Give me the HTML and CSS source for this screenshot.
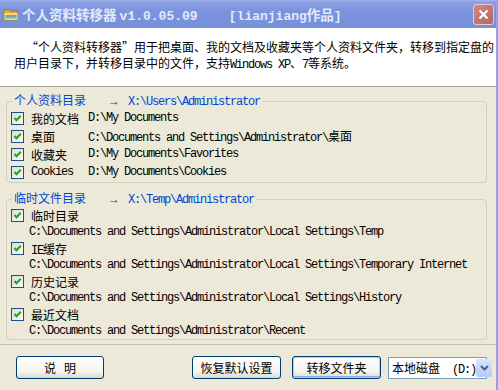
FILE: index.html
```html
<!DOCTYPE html>
<html lang="zh-CN">

<head>
    <meta charset="UTF-8">
    <title>个人资料转移器</title>
    <link rel="stylesheet" href="styles.css">
</head>

<body>
    <div id="window">
        <div class="titlebar">
            <svg class="app-icon" width="16" height="16" viewBox="0 0 16 16">
                <path d="M1 3.5 h5 l1.5 1.5 h7 v9 h-13.5 z" fill="#d9a93f" stroke="#a87a20" stroke-width="1"/>
                <path d="M1.5 7 h13 v7 h-13 z" fill="#f7dc84"/>
                <path d="M2.5 9 h11 v2.5 h-11 z" fill="#6fa3c9"/>
                <path d="M2.5 11.5 h11 v1 h-11 z" fill="#7dbb5a"/>
            </svg>
            <span class="title">个人资料转移器 <span class="title-latin">v1.0.05.09    [lianjiang</span>作品<span class="title-latin">]</span></span>
            <div class="close-btn">
                <svg width="11" height="11" viewBox="0 0 11 11">
                    <path d="M1.5 1.5 L9.5 9.5 M9.5 1.5 L1.5 9.5" stroke="#fff" stroke-width="2.2"/>
                </svg>
            </div>
        </div>

        <div class="intro">
            <p class="first">“个人资料转移器”用于把桌面、我的文档及收藏夹等个人资料文件夹，转移到指定盘的</p>
            <p>用户目录下，并转移目录中的文件，支持<span class="mono">Windows XP</span>、<span class="mono">7</span>等系统。</p>
        </div>

        <div class="panel">
            <fieldset class="group">
                <legend>个人资料目录<span class="mono target">    →  X:\Users\Administrator</span></legend>
                <div class="row">
                    <span class="check"></span>
                    <span class="label">我的文档</span>
                    <span class="mono">D:\My Documents</span>
                </div>
                <div class="row">
                    <span class="check"></span>
                    <span class="label">桌面</span>
                    <span><span class="mono">C:\Documents and Settings\Administrator\</span>桌面</span>
                </div>
                <div class="row">
                    <span class="check"></span>
                    <span class="label">收藏夹</span>
                    <span class="mono">D:\My Documents\Favorites</span>
                </div>
                <div class="row">
                    <span class="check"></span>
                    <span class="label mono">Cookies</span>
                    <span class="mono">D:\My Documents\Cookies</span>
                </div>
            </fieldset>

            <fieldset class="group temp">
                <legend>临时文件目录<span class="mono target">    →  X:\Temp\Administrator</span></legend>
                <div class="item">
                    <div class="row"><span class="check"></span><span class="label">临时目录</span></div>
                    <div class="path mono">C:\Documents and Settings\Administrator\Local Settings\Temp</div>
                </div>
                <div class="item">
                    <div class="row"><span class="check"></span><span class="label"><span class="mono">IE</span>缓存</span></div>
                    <div class="path mono">C:\Documents and Settings\Administrator\Local Settings\Temporary Internet</div>
                </div>
                <div class="item">
                    <div class="row"><span class="check"></span><span class="label">历史记录</span></div>
                    <div class="path mono">C:\Documents and Settings\Administrator\Local Settings\History</div>
                </div>
                <div class="item">
                    <div class="row"><span class="check"></span><span class="label">最近文档</span></div>
                    <div class="path mono">C:\Documents and Settings\Administrator\Recent</div>
                </div>
            </fieldset>
        </div>

        <div class="footer">
            <button class="xp-btn">说<span class="gap"></span>明</button>
            <button class="xp-btn push">恢复默认设置</button>
            <button class="xp-btn default">转移文件夹</button>
            <div class="drive-select">
                <span class="drive-text">本地磁盘<span class="mono">  (D:)</span></span>
                <span class="drop-btn">
                    <svg width="9" height="6" viewBox="0 0 9 6">
                        <path d="M1 1 L4.5 4.5 L8 1" fill="none" stroke="#4d6185" stroke-width="2"/>
                    </svg>
                </span>
            </div>
        </div>
    </div>
</body>

</html>
```

FILE: styles.css
```css
body {
    margin: 0;
    padding: 0;
    background-color: #ece9d8;
    font-family: "Noto Sans CJK SC", sans-serif;
    font-size: 12px;
    color: #000;
}

#window {
    width: 498px;
    height: 390px;
    overflow: hidden;
    box-sizing: border-box;
    border-right: 2px solid #8ea4e2;
}

.mono {
    font-family: "Liberation Mono", monospace;
    letter-spacing: -1.2px;
    white-space: pre;
}

/* title bar */
.titlebar {
    height: 28px;
    display: flex;
    align-items: center;
    padding: 0 2px 0 3px;
    background: linear-gradient(#a3b6ee 0, #8ba0e3 2px, #7a93dc 40%, #7790da 100%);
}

.app-icon {
    margin-right: 3px;
}

.title {
    color: #e2eafa;
    font-weight: bold;
    font-size: 13.5px;
    white-space: pre;
}

.title-latin {
    font-family: "Liberation Mono", monospace;
    font-size: 13px;
}

.close-btn {
    margin-left: auto;
    width: 19px;
    height: 19px;
    border: 1px solid #e6c9cf;
    border-radius: 3px;
    background: linear-gradient(135deg, #d08a88, #b86462);
    display: flex;
    justify-content: center;
    align-items: center;
}

/* intro */
.intro {
    height: 59px;
    background-color: #fff;
    border-bottom: 1px solid #aca899;
    padding: 11px 0 0 14px;
    box-sizing: border-box;
}

.intro p {
    margin: 0;
    line-height: 16px;
    white-space: nowrap;
}

.intro .first {
    text-indent: 12px;
}

/* main panel */
.panel {
    padding: 6px 0 4px 6px;
    border-bottom: 1px solid #c5c2b2;
}

.group {
    width: 481px;
    box-sizing: border-box;
    margin: 0;
    padding: 0 0 1px 4px;
    min-inline-size: 0;
    border: 1px solid #d0d0bf;
    border-radius: 4px;
}

.group legend {
    margin-left: 1px;
    padding: 0 2px;
    line-height: 14px;
    color: #0046d5;
}

.group .target {
    color: #0046d5;
}

.group.temp {
    margin-top: 8px;
    padding-bottom: 0;
}

.row {
    height: 18px;
    display: flex;
    align-items: center;
    white-space: nowrap;
}

.row .label {
    margin-left: 7px;
    width: 57px;
}

.item .row {
    height: 17px;
}

.item .path {
    height: 16px;
    line-height: 16px;
    padding-left: 18px;
}

.check {
    width: 11px;
    height: 11px;
    flex: none;
    border: 1px solid #1c5180;
    background:
        url("data:image/svg+xml,%3Csvg xmlns='http://www.w3.org/2000/svg' width='11' height='11'%3E%3Cpath d='M2.5 5 L4.5 7.2 L8.7 2.8' fill='none' stroke='%2321a121' stroke-width='2'/%3E%3C/svg%3E") center no-repeat,
        linear-gradient(135deg, #dcdcd7, #fbfbf9);
}

/* bottom bar */
.footer {
    display: flex;
    align-items: center;
    padding: 11px 0 0 16px;
}

.xp-btn {
    height: 23px;
    width: 88px;
    padding: 0;
    font-family: "Noto Sans CJK SC", sans-serif;
    font-size: 12px;
    color: #000;
    border: 1px solid #003c74;
    border-radius: 3px;
    background: linear-gradient(#ffffff, #f4f3ee 70%, #dcd8cc);
}

.xp-btn .gap {
    display: inline-block;
    width: 8px;
}

.xp-btn.push {
    margin-left: auto;
    width: 89px;
}

.xp-btn.default {
    margin-left: 11px;
    width: 89px;
    box-shadow: inset 0 0 0 1px #b9cbf3, inset 0 -1px 0 1px #8eaaf0;
}

.drive-select {
    margin-left: 7px;
    margin-right: 9px;
    width: 99px;
    height: 22px;
    box-sizing: border-box;
    border: 1px solid #7f9db9;
    background-color: #fff;
    display: flex;
    align-items: center;
    padding: 0 1px 0 3px;
}

.drive-text {
    white-space: pre;
}

.drop-btn {
    margin-left: auto;
    width: 16px;
    height: 18px;
    flex: none;
    background: linear-gradient(#d7e3fd, #b6cbf8);
    border-radius: 2px;
    display: flex;
    justify-content: center;
    align-items: center;
}
```
